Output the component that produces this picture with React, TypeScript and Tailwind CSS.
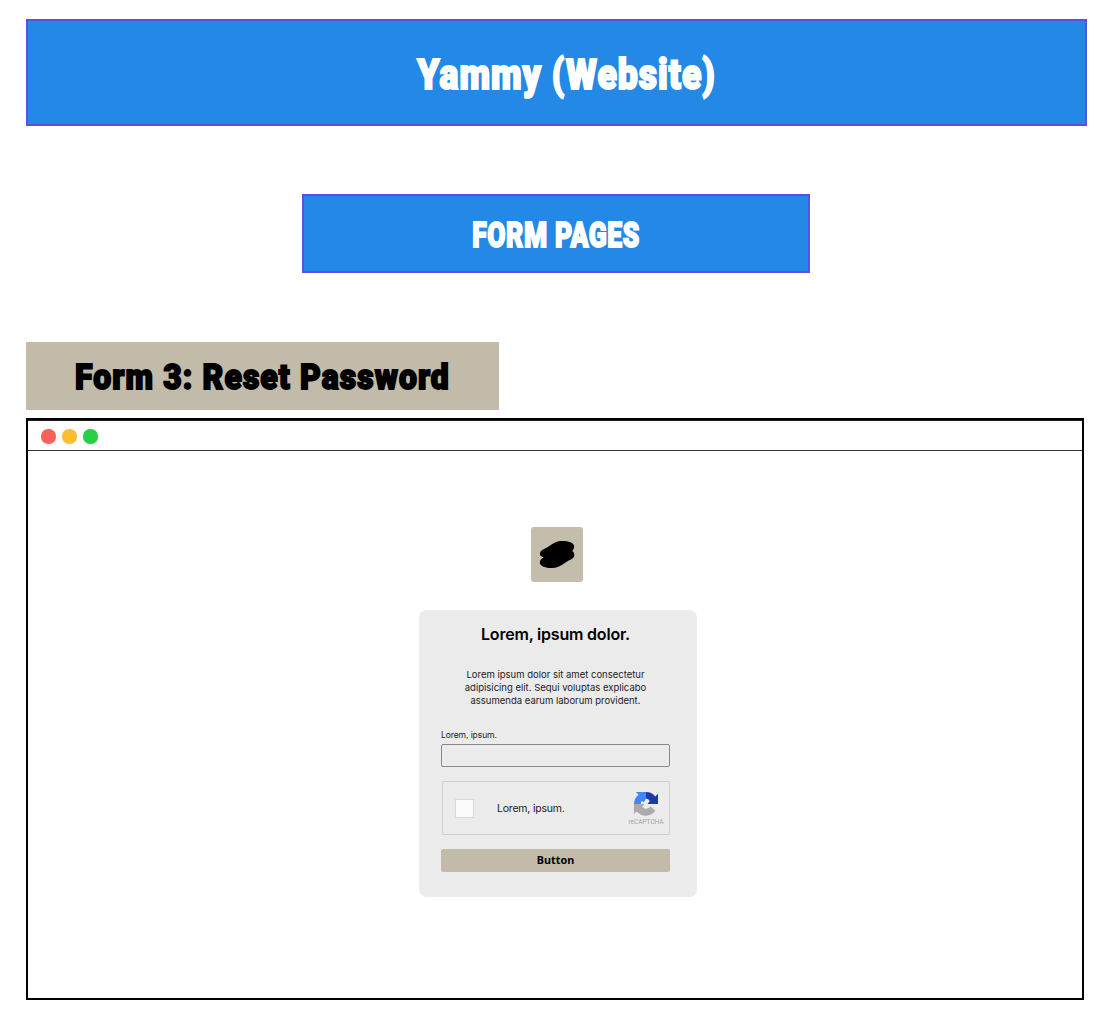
function BlobLogo() {
  return (
    <div className="ml-[531px] mt-[76px] flex h-[55px] w-[52px] items-center justify-center rounded-[3px] bg-[#c5bdab]">
      <svg width="52" height="55" viewBox="0 0 52 55">
        <path
          d="M9 27.500C8.500 24 12 22.500 15 21C20 18.500 23 14.500 30 14C36 13.700 43 15 43.200 19.500C43.300 22 41.500 23 41.300 24.300C42.500 25 43.400 26 43.300 28.500C43 32 38 33 34.500 35.500C30 39 26 41 20.500 41C15 41 9 39.500 8.800 35.500C8.700 32.500 11.500 31.800 12.500 30.200C10.500 29.800 9.200 29 9 27.500Z"
          fill="#000"
        />
      </svg>
    </div>
  );
}

function RecaptchaLogo() {
  return (
    <svg width="24" height="24" viewBox="0 0 64 64">
      <path
        d="M64 32V4.600l-7.200 7.200A32 32 0 0 0 32 0v17a12 12 0 0 1 10 7L36 32z"
        fill="#1c3aa9"
      />
      <path
        d="M32 0H5l7 7A32 32 0 0 0 0 32h18a14 14 0 0 1 3-9l5 5l6-11z"
        fill="#4285f4"
      />
      <path
        d="M0 32v27l7-7a32 32 0 0 0 50-2L44 38a14 14 0 0 1-22 2l6-8z"
        fill="#ababab"
      />
    </svg>
  );
}

export default function App() {
  return (
    <main className="flex h-[1019px] w-[1105px] flex-col items-start overflow-hidden bg-white text-black">
      <header className="ml-[26px] mt-[19px] flex h-[107px] w-[1061px] items-center justify-center border-2 border-[#5b50e6] bg-[#2388e6]">
        <h1 className="translate-x-[10px] translate-y-[2px] scale-x-[0.845] whitespace-nowrap font-['Roboto',sans-serif] text-[42px] font-black leading-none tracking-[1.2px] text-white [-webkit-text-stroke:2px_white]">
          Yammy (Website)
        </h1>
      </header>

      <section className="ml-[302px] mt-[68px] flex h-[79px] w-[508px] items-center justify-center border-2 border-[#5b50e6] bg-[#2388e6]">
        <h2 className="translate-y-[2px] scale-x-[0.755] whitespace-nowrap font-['Roboto',sans-serif] text-[35px] font-black leading-none tracking-[0.8px] text-white [-webkit-text-stroke:1.8px_white]">
          FORM PAGES
        </h2>
      </section>

      <section className="ml-[26px] mt-[69px] flex h-[68px] w-[473px] items-center justify-center bg-[#c3bba9]">
        <h3 className="translate-y-[1px] scale-x-[0.912] whitespace-nowrap font-['Roboto',sans-serif] text-[35px] font-black leading-none tracking-[1.2px] [-webkit-text-stroke:1.8px_black]">
          Form 3: Reset Password
        </h3>
      </section>

      <section className="ml-[26px] mt-[8px] h-[582px] w-[1058px] border-2 border-black">
        <div className="flex h-[31px] items-center gap-[6px] border-b border-t border-b-[#333] border-t-[#222] pl-[13px]">
          <span className="mt-[2px] h-[15px] w-[15px] rounded-[7px] bg-[#ff6159]" />
          <span className="mt-[2px] h-[15px] w-[15px] rounded-[7px] bg-[#fdbd2e]" />
          <span className="mt-[2px] h-[15px] w-[15px] rounded-[7px] bg-[#28d043]" />
        </div>

        <div className="-ml-[28px]">
          <BlobLogo />
          <form className="ml-[419px] mt-[28px] flex h-[287px] w-[278px] flex-col rounded-[8px] bg-[#ebebeb] pl-[22px] font-['Inter',sans-serif]">
            <div className="flex w-[229px] flex-col">
              <h4 className="mt-[14px] self-center whitespace-nowrap text-[16px] font-semibold leading-[20px] tracking-[-0.2px]">
                Lorem, ipsum dolor.
              </h4>
              <p className="mt-[24px] self-center whitespace-nowrap text-center text-[9.5px] leading-[13px] text-[#1c1c1c]">
                Lorem ipsum dolor sit amet consectetur
                <br />
                adipisicing elit. Sequi voluptas explicabo
                <br />
                assumenda earum laborum provident.
              </p>
              <label className="mt-[22px] text-[8.5px] leading-[12px] tracking-[-0.08px] text-[#1c1c1c]">
                Lorem, ipsum.
              </label>
              <div className="mt-[3px] h-[23px] w-[229px] rounded-[2px] border border-[#888]" />
              <div className="ml-[1px] mt-[14px] flex h-[54px] w-[228px] items-center rounded-[2px] border border-[#d4cfc2]">
                <span className="ml-[12px] h-[19px] w-[19px] border border-[#ddd9cf] bg-[#fafafa]" />
                <span className="ml-[23px] w-[131px] translate-y-[1px] text-[10.5px] leading-none tracking-[-0.2px] text-[#1c1c1c]">
                  Lorem, ipsum.
                </span>
                <span className="flex w-[36px] translate-y-[1px] flex-col items-center">
                  <RecaptchaLogo />
                  <span className="mt-[3px] font-['Roboto',sans-serif] text-[6.500px] leading-[7px] text-[#a5a5a5]">
                    reCAPTCHA
                  </span>
                </span>
              </div>
              <button
                type="button"
                className="mt-[14px] flex h-[22.500px] w-[229px] items-center justify-center rounded-[2px] bg-[#c3bba9] font-['Noto_Sans',sans-serif] text-[10.800px] font-bold leading-none"
              >
                Button
              </button>
            </div>
          </form>
        </div>
      </section>
    </main>
  );
}
